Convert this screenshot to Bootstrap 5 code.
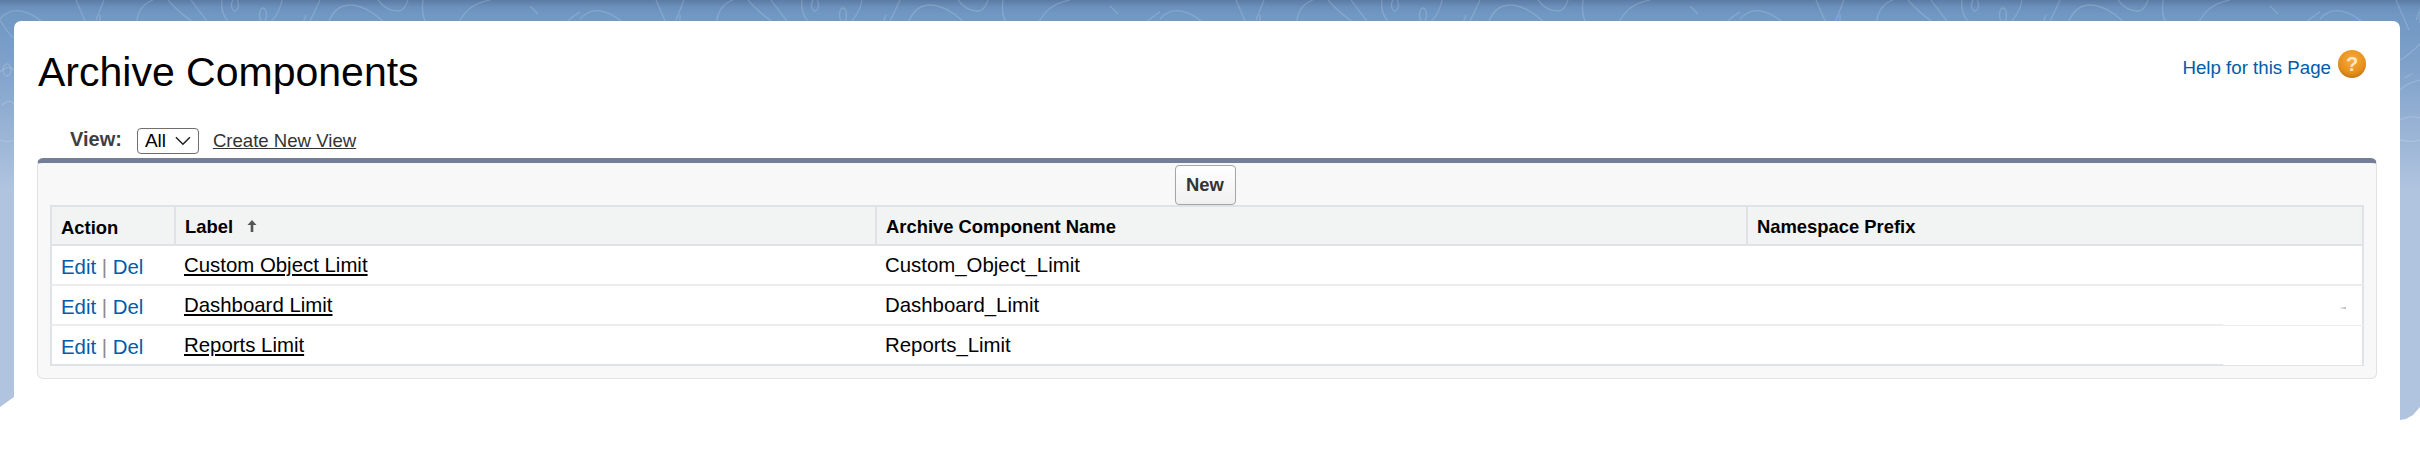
<!DOCTYPE html>
<html lang="en">
<head>
<meta charset="utf-8">
<title>Archive Components</title>
<link href="https://cdn.jsdelivr.net/npm/bootstrap@5.3.0/dist/css/bootstrap.min.css" rel="stylesheet">
<style>
html,body{height:468px;overflow:hidden;background:#fff}
body{font-family:"Liberation Sans",Arial,sans-serif;font-size:20px;color:#000;position:relative}
.backdrop{position:absolute;left:0;top:0;width:2420px;height:420px;background:linear-gradient(180deg,#5b7ba5 0,#6b90bc 7px,#7098c3 14px,#7da0c9 60px,#b0c4df 190px,#b0c4df 100%);clip-path:polygon(0 0,2420px 0,2420px 407px,2413px 415px,2406px 419px,2400px 420px,14px 397px,0 407px)}
.backdrop svg{position:absolute;left:0;top:0}
.sheet{position:relative;margin:21px 20px 0 14px;height:447px;background:#fff;border-radius:7px 7px 0 0}
.page-head{height:107px;padding:0 34px 0 24px}
.page-title{font-size:41px;font-weight:400;line-height:1;margin:31px 0 0}
.help-link{color:#015ba7;text-decoration:none;font-size:18.7px;line-height:22px;margin-top:36px}
.help-wrap{gap:7px}
.help-ball{width:28px;height:28px;margin-top:29px;border-radius:50%;background:radial-gradient(circle at 50% 35%,#f5ac3c 0,#e8901e 55%,#a5650f 100%);color:#fde6c4;font-size:20px;font-weight:700;line-height:28px;text-align:center}
.view-bar{height:30px;padding:0 0 4px 56px}
.view-label{font-weight:700;color:#3f3f3f;font-size:20px;line-height:24px;margin:0 15px 4px 0}
.view-pick{width:62px;height:26px;border:1px solid #6f6f6f;border-radius:4px;padding:0 7px;font-size:19px;line-height:24px;gap:9px;color:#000;margin-right:14px}
.view-new{color:#333;font-size:18.6px;text-decoration:underline}
.list-panel{margin:0 23px;height:221px;background:#f8f8f8;border:1px solid #e0e3e5;border-top:5px solid #747e96;border-radius:6px;padding:0 12px}
.panel-btns{height:42px;padding-right:4px}
.new-btn{width:61px;height:40px;padding:0;margin-top:2px;border:1px solid #a5a5a5;border-radius:4px;background:linear-gradient(#fff,#f0f0f0);color:#333;font-weight:700;font-size:18.4px;line-height:38px}
.data-grid{width:100%;table-layout:fixed;border-collapse:separate;border-spacing:0;background:#fff;margin:0}
.data-grid th{background:#f2f3f3;border:solid #e0e3e5;border-width:2px 2px 2px 0;height:41px;padding:3px 9px 0;font-size:18.4px;font-weight:700;color:#000;vertical-align:middle}
.data-grid th:first-child{border-left:2px solid #e0e3e5;padding-top:4px}
.data-grid td{height:40px;padding:0 8px;font-size:20.4px;border-bottom:2px solid #ededed;vertical-align:middle;color:#000}
.data-grid td:first-child{border-left:2px solid #e0e3e5;padding:5px 8px 0 9px}
.data-grid td:last-child{border-right:2px solid #e0e3e5;position:relative}
.data-grid tr:last-child td{border-bottom-color:#e0e3e5}
.data-grid tbody tr:nth-child(n+2) td:last-child::after{content:"";position:absolute;left:475px;right:0;bottom:-1px;height:1px;background:#fff}
.act{color:#015ba7;text-decoration:none}
.sep{color:#8a8a8a}
.rec{color:#000;text-decoration:underline;text-decoration-thickness:2px;text-underline-offset:2px}
.sort-up{margin-left:9px;vertical-align:1px}
.smudge{position:absolute;left:591px;bottom:15px;width:7px;height:2px;background:linear-gradient(90deg,#fff,#bbb)}
</style>
</head>
<body>
<div class="backdrop">
<svg width="2420" height="420" fill="none" stroke="#fff" stroke-opacity=".16" stroke-width="1.300">
<defs><pattern id="swirl" width="580" height="40" patternUnits="userSpaceOnUse">
<path d="M560 30C570 16 585 8 596 6M0 19C10 8 25 4 54 32M76 0L89 30M104 0L96 20M100 15v8M137 30C135 14 142 4 153 0M168 0C178 12 192 22 204 30M191 0C198 10 206 20 214 30M222 0C220 14 228 24 240 30M282 0C280 12 274 20 262 30M306 15l-3 8M320 0L306 30M326 30C330 14 338 5 350 5C366 5 380 18 393 30M378 0C384 8 390 11 398 11C403 11 406 6 408 0M423 0C421 16 424 26 438 31M454 30C462 16 468 4 490 0M530 6l8 8M474 30C486 24 500 24 515 31M546 30C546 24 552 21 558 24"/>
<ellipse cx="235" cy="5" rx="3.500" ry="6"/><ellipse cx="263" cy="15" rx="3.500" ry="7"/>
</pattern></defs>
<rect x="0" y="0" width="2420" height="40" fill="url(#swirl)" stroke="none"/>
<path d="M0 20C6 30 10 36 14 38M0 72C6 66 10 66 14 70M2 105C8 100 11 100 14 104M0 140c5 2 10 2 14 0M2400 60c8-4 14-10 20-16M2400 90c8-8 14-8 20-10M2404 78l8-4M2400 120c6-3 14-4 20-2M2400 140c8 2 14 2 20 0"/>
<ellipse cx="7" cy="70" rx="4" ry="6"/>
</svg>
</div>
<main class="sheet">
<header class="page-head d-flex justify-content-between align-items-start">
<h1 class="page-title">Archive Components</h1>
<div class="help-wrap d-flex align-items-start"><a class="help-link" href="#">Help for this Page</a><span class="help-ball">?</span></div>
</header>
<div class="view-bar d-flex align-items-center">
<span class="view-label">View:</span>
<span class="view-pick d-inline-flex align-items-center">All<svg width="17" height="10" viewBox="0 0 17 10" fill="none" stroke="#222" stroke-width="1.6"><path d="M1 1l7.500 7.500L16 1"/></svg></span>
<a class="view-new" href="#">Create New View</a>
</div>
<section class="list-panel">
<div class="panel-btns d-flex justify-content-center align-items-start"><button class="new-btn" type="button">New</button></div>
<table class="data-grid">
<colgroup><col style="width:126px"><col style="width:701px"><col style="width:871px"><col></colgroup>
<thead><tr><th>Action</th><th>Label <svg class="sort-up" width="10" height="12" viewBox="0 0 10 12" fill="#555"><path d="M5 0l4.500 5H6.300v7H3.700V5H.5z"/></svg></th><th>Archive Component Name</th><th>Namespace Prefix</th></tr></thead>
<tbody>
<tr><td><a class="act" href="#">Edit</a> <span class="sep">|</span> <a class="act" href="#">Del</a></td><td><a class="rec" href="#">Custom Object Limit</a></td><td>Custom_Object_Limit</td><td></td></tr>
<tr><td><a class="act" href="#">Edit</a> <span class="sep">|</span> <a class="act" href="#">Del</a></td><td><a class="rec" href="#">Dashboard Limit</a></td><td>Dashboard_Limit</td><td><span class="smudge"></span></td></tr>
<tr><td><a class="act" href="#">Edit</a> <span class="sep">|</span> <a class="act" href="#">Del</a></td><td><a class="rec" href="#">Reports Limit</a></td><td>Reports_Limit</td><td></td></tr>
</tbody>
</table>
</section>
</main>
<script src="https://cdn.jsdelivr.net/npm/bootstrap@5.3.0/dist/js/bootstrap.bundle.min.js"></script>
</body>
</html>
